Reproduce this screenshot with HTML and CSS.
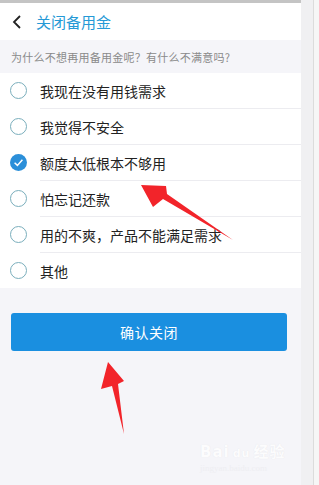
FILE: index.html
```html
<!DOCTYPE html>
<html lang="zh-CN">
<head>
    <meta charset="UTF-8">
    <meta name="viewport" content="width=device-width, initial-scale=1.0">
    <title>关闭备用金</title>
    <link rel="stylesheet" href="styles.css">
</head>
<body>
    <div class="page">
        <div class="main">
            <div class="topline"></div>
            <div class="header">
                <svg class="back" width="10" height="14" viewBox="0 0 10 14">
                    <path d="M8 1 L2 7 L8 13" fill="none" stroke="#222" stroke-width="1.8"/>
                </svg>
                <span class="title">关闭备用金</span>
            </div>
            <div class="question">为什么不想再用备用金呢？有什么不满意吗?</div>
            <ul class="options">
                <li class="option"><span class="radio"></span><span class="label">我现在没有用钱需求</span></li>
                <li class="option"><span class="radio"></span><span class="label">我觉得不安全</span></li>
                <li class="option">
                    <svg class="radio-on" width="17" height="17" viewBox="0 0 17 17">
                        <circle cx="8.5" cy="8.5" r="8.5" fill="#2b8fd9"/>
                        <path d="M4.6 8.8 L7.4 11.4 L12.4 5.8" fill="none" stroke="#fff" stroke-width="1.5"/>
                    </svg>
                    <span class="label">额度太低根本不够用</span>
                </li>
                <li class="option"><span class="radio"></span><span class="label">怕忘记还款</span></li>
                <li class="option"><span class="radio"></span><span class="label">用的不爽，产品不能满足需求</span></li>
                <li class="option"><span class="radio"></span><span class="label">其他</span></li>
            </ul>
            <div class="actions">
                <button class="btn-confirm">确认关闭</button>
            </div>
        </div>
        <div class="rail"></div>
        <div class="edge"></div>
    </div>

    <!-- annotation arrows -->
    <svg class="marks" width="319" height="485" viewBox="0 0 319 485">
        <polygon points="141,185 166,186 167,194 233,240 163,199 153,207" fill="#f2242a"/>
        <polygon points="108,362 124,381 118,384 124,434 112,386 101,389" fill="#f2242a"/>
    </svg>

    <div class="watermark">
        <div class="wm-logo">Bai<span class="wm-paw">du</span>经验</div>
        <div class="wm-url">jingyan.baidu.com</div>
    </div>
</body>
</html>
```

FILE: styles.css
```css
body {
    margin: 0;
    width: 319px;
    height: 485px;
    overflow: hidden;
    background-color: #f5f5f9;
    font-family: "Noto Sans CJK SC", "Noto Sans", sans-serif;
    position: relative;
}
.page {
    display: flex;
    height: 485px;
}
.main {
    width: 301px;
    flex-shrink: 0;
}
.topline {
    height: 3px;
    background-color: #c4c4c4;
}
.header {
    height: 37px;
    background-color: #fff;
    display: flex;
    align-items: center;
    padding-left: 12px;
}
.back {
    margin-right: 14px;
}
.title {
    color: #2599d6;
    font-size: 15px;
    line-height: 1;
}
.question {
    height: 32px;
    padding-left: 11px;
    display: flex;
    align-items: center;
    color: #8a8a8a;
    font-size: 11px;
    letter-spacing: 0.25px;
    padding-top: 1px;
}
.options {
    list-style: none;
    margin: 0;
    padding: 0;
    background-color: #fff;
}
.option {
    height: 35px;
    display: flex;
    align-items: center;
    padding-left: 10px;
    position: relative;
}
.option + .option::before {
    content: "";
    position: absolute;
    top: -1px;
    left: 40px;
    right: 0;
    height: 1px;
    background-color: #ececf0;
}
.option + .option {
    margin-top: 1px;
}
.radio {
    width: 17px;
    height: 17px;
    border: 1.3px solid #7aaebc;
    border-radius: 50%;
    box-sizing: border-box;
}
.radio-on {
    display: block;
}
.label {
    margin-left: 13px;
    font-size: 14px;
    color: #222;
}
.actions {
    padding: 25px 14px 0 11px;
}
.btn-confirm {
    display: block;
    width: 276px;
    height: 38px;
    border: none;
    border-radius: 3px;
    background-color: #1a8fe0;
    color: #fff;
    font-family: "Noto Sans CJK SC", sans-serif;
    font-size: 14px;
    letter-spacing: 0.5px;
}
.rail {
    width: 12px;
    background-color: #f0f0f2;
    border-right: 1px solid #dcdcdc;
}
.edge {
    flex: 1;
    background-color: #f6f6f6;
}
.marks {
    position: absolute;
    top: 0;
    left: 0;
}
.watermark {
    position: absolute;
    left: 200px;
    top: 432px;
    color: #fcfcfd;
    text-shadow: 0 0 1px #e4e4e8;
    font-family: "DejaVu Sans", "Noto Sans CJK SC", sans-serif;
}
.wm-logo {
    font-size: 15px;
    font-weight: bold;
    padding-top: 8px;
    letter-spacing: 1px;
}
.wm-paw {
    font-size: 11px;
    margin: 0 3px;
}
.wm-url {
    font-size: 9px;
    font-family: "Liberation Serif", serif;
    color: #eeeef2;
    text-shadow: none;
    margin-top: 2px;
}
```
